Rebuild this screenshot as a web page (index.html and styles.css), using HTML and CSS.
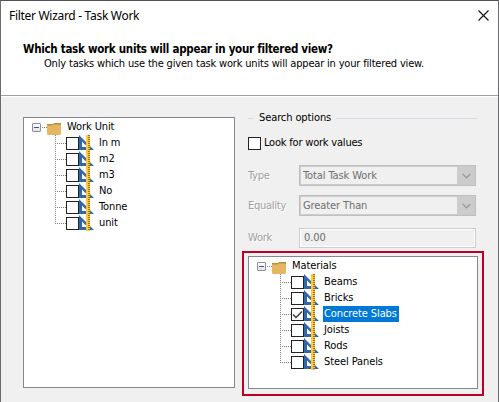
FILE: index.html
```
<!DOCTYPE html>
<html lang="en">
<head>
<meta charset="utf-8">
<title>Filter Wizard - Task Work</title>
<link rel="stylesheet" href="styles.css">
</head>
<body>
<svg class="defs" width="0" height="0">
  <symbol id="folder" viewBox="0 0 14 12">
    <path d="M0 1h6l1-1h7v5H0z" fill="#b98a3c"/>
    <path d="M0 2.500h5l1.500-1h7.500v9q0 1.500-1.500 1.500H1.500Q0 12 0 10.500z" fill="#e5b765"/>
  </symbol>
  <symbol id="ruler" viewBox="0 0 15 16">
    <path fill-rule="evenodd" d="M0 0L15 15H0zM3 6.500V12h5.500z" fill="#3467a9"/>
    <path d="M7 0h4v16H7z" fill="#ffca3a"/>
    <path d="M10 0v16" stroke="#96702c" stroke-width="2" stroke-dasharray="1 1"/>
  </symbol>
</svg>
<div class="window">
  <header class="head">
    <div class="titlebar">
      <span class="title">Filter Wizard - Task Work</span>
      <svg class="close" width="11" height="11" viewBox="0 0 11 11"><path d="M.5.5l10 10M10.500.5l-10 10" stroke="#111" stroke-width="1.100"/></svg>
    </div>
    <h1><span>Which task work units will appear in your filtered view?</span></h1>
    <p><span>Only tasks which use the given task work units will appear in your filtered view.</span></p>
  </header>
  <main class="body">
    <div class="tree units">
      <div class="root"><span class="expander"></span><span class="stub"></span><svg class="folder"><use href="#folder"/></svg><span class="name">Work Unit</span></div>
      <ul>
        <li><span class="check"></span><svg class="ruler"><use href="#ruler"/></svg><span class="name">ln m</span></li>
        <li><span class="check"></span><svg class="ruler"><use href="#ruler"/></svg><span class="name">m2</span></li>
        <li><span class="check"></span><svg class="ruler"><use href="#ruler"/></svg><span class="name">m3</span></li>
        <li><span class="check"></span><svg class="ruler"><use href="#ruler"/></svg><span class="name">No</span></li>
        <li><span class="check"></span><svg class="ruler"><use href="#ruler"/></svg><span class="name">Tonne</span></li>
        <li><span class="check"></span><svg class="ruler"><use href="#ruler"/></svg><span class="name">unit</span></li>
      </ul>
    </div>
    <section class="options">
      <div class="legend"><span>Search options</span></div>
      <div class="look"><span class="check"></span><span class="look-text">Look for work values</span></div>
      <div class="field"><span class="label">Type</span><div class="select"><span>Total Task Work</span><i><svg width="9" height="6" viewBox="0 0 9 6"><path d="M.7 1l3.800 3.800L8.300 1" fill="none" stroke="#9b9b9b" stroke-width="1.300"/></svg></i></div></div>
      <div class="field"><span class="label">Equality</span><div class="select"><span>Greater Than</span><i><svg width="9" height="6" viewBox="0 0 9 6"><path d="M.7 1l3.800 3.800L8.300 1" fill="none" stroke="#9b9b9b" stroke-width="1.300"/></svg></i></div></div>
      <div class="field work"><span class="label">Work</span><div class="input"><span>0.00</span></div></div>
      <div class="highlight">
        <div class="tree materials">
          <div class="root"><span class="expander"></span><span class="stub"></span><svg class="folder"><use href="#folder"/></svg><span class="name">Materials</span></div>
          <ul>
            <li><span class="check"></span><svg class="ruler"><use href="#ruler"/></svg><span class="name">Beams</span></li>
            <li><span class="check"></span><svg class="ruler"><use href="#ruler"/></svg><span class="name">Bricks</span></li>
            <li><span class="check"><svg width="11" height="11" viewBox="0 0 11 11"><path d="M1 5.500l3 3L10 2.500" fill="none" stroke="#333" stroke-width="1.300"/></svg></span><svg class="ruler"><use href="#ruler"/></svg><span class="name selected">Concrete Slabs</span></li>
            <li><span class="check"></span><svg class="ruler"><use href="#ruler"/></svg><span class="name">Joists</span></li>
            <li><span class="check"></span><svg class="ruler"><use href="#ruler"/></svg><span class="name">Rods</span></li>
            <li><span class="check"></span><svg class="ruler"><use href="#ruler"/></svg><span class="name">Steel Panels</span></li>
          </ul>
        </div>
      </div>
    </section>
  </main>
</div>
</body>
</html>
```
FILE: styles.css
```
* { box-sizing: border-box; }
body {
  margin: 0;
  overflow: hidden;
  font: 11px/16px "DejaVu Sans Condensed", "DejaVu Sans", sans-serif;
  font-stretch: condensed;
  letter-spacing: -0.1px;
  color: #000;
  white-space: nowrap;
}
.defs { display: block; }
svg { display: block; flex: none; }
.window {
  width: 499px;
  height: 402px;
  border: 1px solid #6b6b6d;
  border-top-color: #525254;
  border-bottom: 0;
  background: #f0f0f0;
}
.head {
  height: 96px;
  background: #fff;
  border-bottom: 1px solid #fff;
  box-shadow: inset 0 -1px #a0a0a0;
}
.titlebar {
  display: flex;
  justify-content: space-between;
  height: 40px;
  padding: 6px 9px 0 8px;
}
.title { font: 12px/18px "Noto Sans", "Open Sans", sans-serif; letter-spacing: -0.3px; }
.close { margin-top: 3px; }
h1, p { margin: 0; }
h1 { font-size: 11.5px; font-weight: 700; height: 15px; padding-left: 22px; letter-spacing: -0.28px; }
p { padding-left: 43px; font-size: 11px; letter-spacing: -0.175px; }

.body { display: flex; gap: 7px; padding-left: 22px; }
.tree {
  background: #fff;
  border: 1px solid #828790;
  padding: 1px 0 0 8px;
}
.units { width: 212px; height: 271px; margin-top: 20px; }
.root { display: flex; align-items: center; height: 16px; }
.expander {
  width: 9px;
  height: 9px;
  border: 1px solid #919191;
  border-radius: 1px;
  background: linear-gradient(#3e55a4, #3e55a4) center / 5px 1px no-repeat, linear-gradient(#fff, #e2e2e2);
}
.stub {
  width: 6px;
  height: 1px;
  background: repeating-linear-gradient(90deg, transparent 0 1px, #808080 1px 2px);
}
.folder { width: 14px; height: 12px; margin-top: 3px; }
.root .name { margin-left: 6px; }
ul {
  list-style: none;
  margin: 0 0 0 23px;
  padding: 0;
  background: repeating-linear-gradient(#808080 0 1px, transparent 1px 2px) 0 0 / 1px 89px no-repeat;
}
li { display: flex; align-items: center; height: 16px; }
li::before {
  content: "";
  width: 11px;
  height: 1px;
  background: repeating-linear-gradient(90deg, #808080 0 1px, transparent 1px 2px);
}
.check {
  flex: none;
  width: 13px;
  height: 13px;
  border: 1px solid #222;
  background: #fff;
}
.ruler { width: 15px; height: 16px; }
li .name { margin-left: 4px; padding: 0 1px; height: 16px; }
.selected { background: #0078d7; color: #fff; width: 76px; }

.options { width: 242px; }
.legend {
  display: flex;
  align-items: center;
  gap: 5px;
  height: 16px;
  margin: 13px 6px 0;
}
.legend::before, .legend::after { content: ""; height: 1px; background: #d2dde8; width: 6px; }
.legend::after { flex: 1; }
.look { display: flex; align-items: center; gap: 3px; height: 16px; margin: 9px 0 14px 6px; }
.look-text { letter-spacing: -0.2px; }
.field { display: flex; align-items: center; height: 21px; margin: 0 8px 9px 6px; }
.label { width: 51px; color: #a0a0a0; text-shadow: 1px 1px #fff; letter-spacing: -0.25px; }
.select {
  flex: 1;
  display: flex;
  height: 21px;
  border: 1px solid #bfbfbf;
  outline: 1px solid #ccc;
  outline-offset: -2px;
  padding: 2px 1px 0 3px;
  color: #6d6d6d;
}
.select i {
  display: grid;
  place-items: center;
  width: 18px;
  height: 19px;
  margin: -2px -1px 0 auto;
  background: #ccc;
}
.input {
  flex: 1;
  height: 20px;
  padding: 1px 4px;
  border: 1px solid #ccc;
  box-shadow: inset 0 0 0 1px #fff;
  color: #6d6d6d;
}
.field.work { height: 20px; margin: 12px 8px 3px 6px; }
.highlight {
  width: 242px;
  height: 145px;
  border: 2px solid #b90027;
  padding: 3px 4px;
}
.materials { height: 133px; }
```
